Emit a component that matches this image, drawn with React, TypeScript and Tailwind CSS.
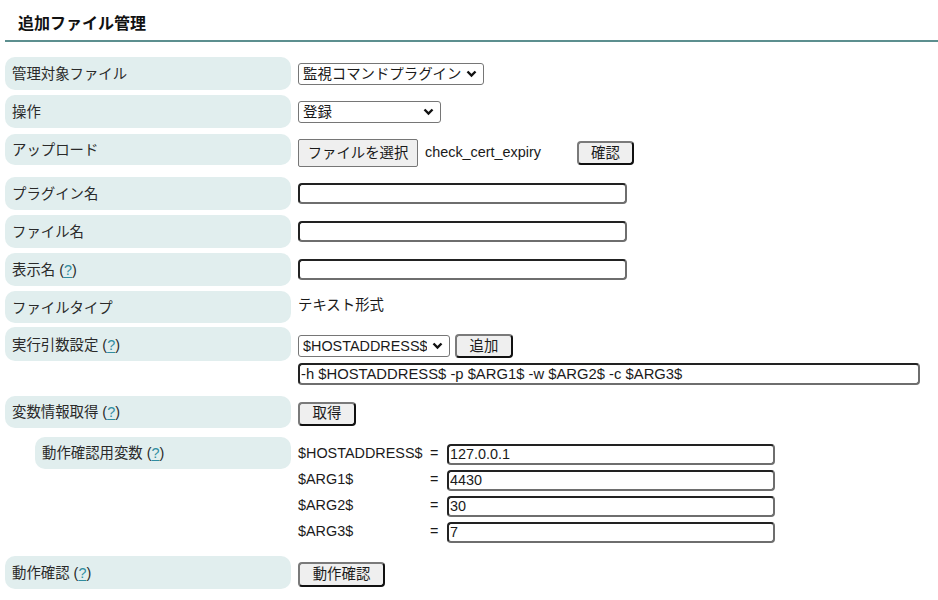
import type { ReactNode } from "react";

const FONT = "font-['Liberation_Sans','Noto_Sans_CJK_JP',sans-serif]";

function Help() {
  return (
    <span className="ml-[4px]">
      (<span className="text-[#2f8ca0] underline underline-offset-2">?</span>)
    </span>
  );
}

function Chevron() {
  return (
    <svg width="11" height="8" viewBox="0 0 11 8" className="shrink-0">
      <polyline points="1.5,1.5 5.5,5.5 9.5,1.5" fill="none" stroke="#111" strokeWidth="2.4" />
    </svg>
  );
}

function Select({ value, w }: { value: string; w: string }) {
  return (
    <div
      className={`flex h-[22px] items-center justify-between rounded-[3px] border border-[#767676] bg-white pl-[4px] pr-[6px] ${w}`}
    >
      <span className="truncate leading-none">{value}</span>
      <Chevron />
    </div>
  );
}

function Button({ children, w, h = "h-[24px]" }: { children: ReactNode; w: string; h?: string }) {
  return (
    <button
      type="button"
      className={`flex items-center justify-center rounded-[4px] border-2 border-[#7a7a7a] border-b-[#111] border-r-[#111] bg-[#efefef] leading-none ${w} ${h}`}
    >
      {children}
    </button>
  );
}

function TextBox({ value = "", w, h = "h-[21px]" }: { value?: string; w: string; h?: string }) {
  return (
    <input
      readOnly
      value={value}
      className={`rounded-[4px] border-2 border-[#222] border-b-[#6e6e6e] border-r-[#6e6e6e] bg-white px-[1px] text-[14.4px] leading-none outline-none ${w} ${h}`}
    />
  );
}

function Row({
  label,
  boxH,
  mt,
  indent = false,
  children,
}: {
  label: ReactNode;
  boxH: string;
  mt: string;
  indent?: boolean;
  children: ReactNode;
}) {
  return (
    <div className={`flex items-start gap-[7px] ${mt}`}>
      <div className={`w-[286px] shrink-0 ${indent ? "pl-[30px]" : ""}`}>
        <div className={`flex items-center rounded-[10px] bg-[#e1eeee] pl-[7px] pt-[3px] text-[#2a2a2a] ${boxH}`}>
          {label}
        </div>
      </div>
      <div className="min-w-0 flex-1">{children}</div>
    </div>
  );
}

const vars = [
  { name: "$HOSTADDRESS$", value: "127.0.0.1" },
  { name: "$ARG1$", value: "4430" },
  { name: "$ARG2$", value: "30" },
  { name: "$ARG3$", value: "7" },
];

export default function App() {
  return (
    <div className={`min-h-[600px] bg-white text-[14.4px] text-[#1a1a1a] ${FONT}`}>
      <div className="pl-[5px]">
        <h2 className="h-[40px] pl-[13px] pt-[13px] text-[16px] font-bold leading-[22px] text-[#111]">
          追加ファイル管理
        </h2>
        <div className="h-[2px] bg-[#5c8f8f]" />

        <Row label="管理対象ファイル" boxH="h-[33px]" mt="mt-[15px]">
          <div className="pt-[6px]">
            <Select value="監視コマンドプラグイン" w="w-[186px]" />
          </div>
        </Row>

        <Row label="操作" boxH="h-[33px]" mt="mt-[5px]">
          <div className="pt-[6px]">
            <Select value="登録" w="w-[143px]" />
          </div>
        </Row>

        <Row label="アップロード" boxH="h-[31px]" mt="mt-[6px]">
          <div className="flex items-center pt-[5px]">
            <button
              type="button"
              className="h-[28px] w-[120px] rounded-[2px] border border-[#767676] bg-[#efefef] leading-none"
            >
              ファイルを選択
            </button>
            <span className="ml-[7px] w-[152px]">check_cert_expiry</span>
            <Button w="w-[57px]">確認</Button>
          </div>
        </Row>

        <Row label="プラグイン名" boxH="h-[33px]" mt="mt-[10px]">
          <div className="pt-[6px]">
            <TextBox w="w-[329px]" />
          </div>
        </Row>

        <Row label="ファイル名" boxH="h-[33px]" mt="mt-[5px]">
          <div className="pt-[6px]">
            <TextBox w="w-[329px]" />
          </div>
        </Row>

        <Row
          label={
            <>
              表示名
              <Help />
            </>
          }
          boxH="h-[33px]"
          mt="mt-[5px]"
        >
          <div className="pt-[6px]">
            <TextBox w="w-[329px]" />
          </div>
        </Row>

        <Row label="ファイルタイプ" boxH="h-[32px]" mt="mt-[5px]">
          <div className="flex h-[30px] items-center">テキスト形式</div>
        </Row>

        <Row
          label={
            <>
              実行引数設定
              <Help />
            </>
          }
          boxH="h-[34px]"
          mt="mt-[4px]"
        >
          <div className="pt-[7px]">
            <div className="flex h-[24px] items-center gap-[5px]">
              <Select value="$HOSTADDRESS$" w="w-[152px]" />
              <Button w="w-[58px]">追加</Button>
            </div>
            <div className="mt-[5px]">
              <input
                readOnly
                value="-h $HOSTADDRESS$ -p $ARG1$ -w $ARG2$ -c $ARG3$"
                className="h-[22px] w-[622px] rounded-[4px] border-2 border-[#222] border-b-[#6e6e6e] border-r-[#6e6e6e] bg-white px-[1px] text-[14.8px] leading-none outline-none"
              />
            </div>
          </div>
        </Row>

        <Row
          label={
            <>
              変数情報取得
              <Help />
            </>
          }
          boxH="h-[32px]"
          mt="mt-[10px]"
        >
          <div className="pt-[6px]">
            <Button w="w-[58px]">取得</Button>
          </div>
        </Row>

        <Row
          label={
            <>
              動作確認用変数
              <Help />
            </>
          }
          boxH="h-[32px]"
          mt="mt-[9px]"
          indent
        >
          <div className="flex flex-col gap-[5px] pt-[7px]">
            {vars.map((v) => (
              <div key={v.name} className="flex h-[21px] items-center">
                <span className="w-[131px]">{v.name}</span>
                <span className="w-[18px] pl-[1px]">=</span>
                <TextBox value={v.value} w="w-[328px]" />
              </div>
            ))}
          </div>
        </Row>

        <Row
          label={
            <>
              動作確認
              <Help />
            </>
          }
          boxH="h-[33px]"
          mt="mt-[13px]"
        >
          <div className="pt-[6px]">
            <Button w="w-[87px]" h="h-[25px]">
              動作確認
            </Button>
          </div>
        </Row>
      </div>
    </div>
  );
}
